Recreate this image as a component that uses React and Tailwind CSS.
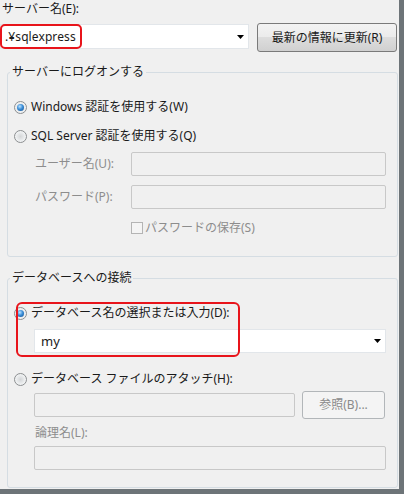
const font = "font-['Noto_Sans','Noto_Sans_CJK_JP',sans-serif]"

function Radio({ checked }) {
    return (
        <div className="w-[13px] h-[13px] rounded-full border border-[#8c8f91] bg-[radial-gradient(circle_at_50%_50%,#d4d6d8_0%,#eef0f1_60%,#f8f8f8_100%)] flex items-center justify-center shrink-0">
            {checked && (
                <div className="w-[7px] h-[7px] rounded-full bg-[radial-gradient(circle_at_40%_35%,#bfe4ff_0%,#3c8fd8_45%,#0f4a8a_100%)]" />
            )}
        </div>
    )
}

function Arrow() {
    return (
        <svg width="7" height="4" viewBox="0 0 7 4">
            <path d="M0 0h7L3.5 4z" fill="#000" />
        </svg>
    )
}

function GroupBox({ label, className, children }) {
    return (
        <div className={`relative ml-[7px] w-[391px] border border-[#d5dde3] rounded-[3px] ${className}`}>
            <span className="absolute left-[2px] top-[-9px] px-[2px] bg-[#f0f0f0] leading-[16px]">{label}</span>
            {children}
        </div>
    )
}

export default function App() {
    return (
        <div className={`w-[404px] h-[494px] bg-[#6d7478] text-[12px] text-[#1a1a1a] ${font}`}>
            <div className="w-[399px] h-[489px] bg-[#f0f0f0] overflow-hidden">
                {/* Server name */}
                <div className="h-[24px] pl-[2px] leading-[18px]">サーバー名(E):</div>
                <div className="flex items-start">
                    <div className="relative w-[249px] h-[25px] bg-white border border-[#e2e6ea] flex items-center justify-between pl-[4px] pr-[4px]">
                        <span className="leading-[16px] tracking-[0.1px]">.¥sqlexpress</span>
                        <Arrow />
                        {/* red highlight */}
                        <div className="absolute left-[-1px] top-[-1px] w-[82px] h-[25px] border-2 border-[#e8141b] rounded-[5px]" />
                    </div>
                    <button className="ml-[8px] -mt-[1px] w-[140px] h-[29px] border border-[#7a7a7a] rounded-[3px] bg-[linear-gradient(#f3f3f3_0%,#ebebeb_50%,#dddddd_50%,#d0d0d0_100%)] leading-[16px]">
                        最新の情報に更新(R)
                    </button>
                </div>

                {/* Logon group */}
                <GroupBox label="サーバーにログオンする" className="mt-[20px] h-[185px]">
                    <div className="mt-[25px] h-[18px] flex items-center gap-[4px] pl-[6px]">
                        <Radio checked />
                        <span className="leading-[16px]">Windows 認証を使用する(W)</span>
                    </div>
                    <div className="mt-[11px] h-[18px] flex items-center gap-[4px] pl-[6px]">
                        <Radio />
                        <span className="leading-[16px]">SQL Server 認証を使用する(Q)</span>
                    </div>
                    <div className="mt-[7px] h-[24px] flex items-center pl-[27px] text-[#8d8d8d]">
                        <span className="w-[96px] leading-[16px]">ユーザー名(U):</span>
                        <div className="w-[255px] h-[24px] border border-[#c8c8c8] rounded-[2px]" />
                    </div>
                    <div className="mt-[9px] h-[24px] flex items-center pl-[27px] text-[#8d8d8d]">
                        <span className="w-[96px] leading-[16px]">パスワード(P):</span>
                        <div className="w-[255px] h-[24px] border border-[#c8c8c8] rounded-[2px]" />
                    </div>
                    <div className="mt-[12px] h-[14px] flex items-center pl-[123px] text-[#8d8d8d]">
                        <div className="w-[12px] h-[12px] border border-[#b4b4b4] bg-[#f4f4f4]" />
                        <span className="ml-[2px] leading-[16px]">パスワードの保存(S)</span>
                    </div>
                </GroupBox>

                {/* Database group */}
                <GroupBox label="データベースへの接続" className="mt-[21px] h-[210px]">
                    <div className="mt-[25px] h-[18px] flex items-center gap-[4px] pl-[6px]">
                        <Radio checked />
                        <span className="leading-[16px]">データベース名の選択または入力(D):</span>
                    </div>
                    <div className="mt-[7px] ml-[26px] w-[352px] h-[24px] bg-white border border-[#e2e6ea] flex items-center justify-between pl-[6px] pr-[4px]">
                        <span className="leading-[16px] text-[13px]">my</span>
                        <Arrow />
                    </div>
                    <div className="mt-[17px] h-[18px] flex items-center gap-[4px] pl-[6px]">
                        <Radio />
                        <span className="leading-[16px]">データベース ファイルのアタッチ(H):</span>
                    </div>
                    <div className="mt-[3px] h-[28px] flex items-center pl-[26px]">
                        <div className="w-[261px] h-[24px] border border-[#c8c8c8] rounded-[2px]" />
                        <button className="ml-[7px] w-[83px] h-[28px] border border-[#b2b6b9] rounded-[3px] bg-[#f4f4f4] text-[#8a8a8a] leading-[16px]">
                            参照(B)...
                        </button>
                    </div>
                    <div className="mt-[6px] h-[16px] pl-[27px] leading-[16px] text-[#8d8d8d]">論理名(L):</div>
                    <div className="mt-[5px] ml-[26px] w-[352px] h-[24px] border border-[#c8c8c8] rounded-[2px]" />

                    {/* red highlight */}
                    <div className="absolute left-[8px] top-[23px] w-[224px] h-[55px] border-2 border-[#e8141b] rounded-[6px]" />
                </GroupBox>
            </div>
        </div>
    )
}
